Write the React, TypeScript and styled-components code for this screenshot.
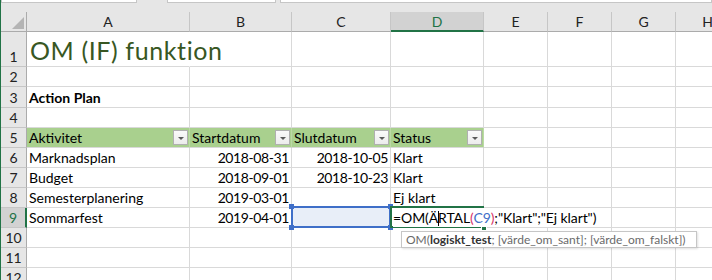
import React from "react";
import styled, { createGlobalStyle, css } from "styled-components";

const GREEN = "#217346";
const GRID = "#d9d9d9";
const REF_BLUE = "#3f6fc8";
const FONT = `Lato, "Noto Sans", "DejaVu Sans", sans-serif`;

const GlobalStyle = createGlobalStyle`
  html, body { margin: 0; padding: 0; background: #fff; }
  body { font-family: ${FONT}; }
  * { box-sizing: border-box; }
`;

const Window = styled.div`
  width: 712px;
  height: 280px;
  overflow: hidden;
  border-left: 1px solid ${GREEN};
  background: #fff;
  display: flex;
  flex-direction: column;
`;

const FormulaStrip = styled.div`
  height: 12px;
  flex: none;
  background: #e6e6e6;
  display: flex;
  align-items: flex-start;
`;

const FieldBox = styled.div<{ $width?: number; $gap?: number }>`
  height: 3px;
  background: #fff;
  border: 1px solid #c6c6c6;
  border-top: none;
  width: ${(p) => (p.$width ? `${p.$width}px` : "auto")};
  flex: ${(p) => (p.$width ? "none" : "1")};
  margin-left: ${(p) => p.$gap ?? 0}px;
`;

const Sheet = styled.div`
  display: grid;
  grid-template-columns: 26px 163px 102px 99px 93px 64px 64px 64px 64px;
  grid-template-rows: 20px 35px 20px 21px repeat(9, 20px);
`;

const Corner = styled.div`
  background: #e6e6e6;
  border-right: 1px solid #ababab;
  border-bottom: 1px solid #ababab;
  display: flex;
  justify-content: flex-end;
  align-items: flex-end;
  padding: 0 2px 2px 0;

  &::after {
    content: "";
    border-left: 12px solid transparent;
    border-bottom: 12px solid #b4b4b4;
  }
`;

const ColHead = styled.div<{ $active?: boolean }>`
  background: ${(p) => (p.$active ? "#d2d2d2" : "#e6e6e6")};
  border-right: 1px solid #c6c6c6;
  border-bottom: ${(p) => (p.$active ? `2px solid ${GREEN}` : "1px solid #ababab")};
  color: ${(p) => (p.$active ? GREEN : "#222")};
  font-size: 14px;
  display: flex;
  align-items: center;
  justify-content: center;
`;

const RowHead = styled.div<{ $active?: boolean }>`
  background: ${(p) => (p.$active ? "#d2d2d2" : "#e6e6e6")};
  border-bottom: 1px solid #c6c6c6;
  border-right: ${(p) => (p.$active ? `2px solid ${GREEN}` : "1px solid #ababab")};
  color: ${(p) => (p.$active ? GREEN : "#222")};
  font-size: 14px;
  line-height: 18px;
  display: flex;
  align-items: flex-end;
  justify-content: center;
`;

const Cell = styled.div<{ $align?: "left" | "right"; $bold?: boolean; $line?: string; $top?: boolean }>`
  position: relative;
  z-index: ${(p) => (p.$top ? 2 : "auto")};
  border-right: 1px solid ${(p) => p.$line ?? GRID};
  border-bottom: 1px solid ${GRID};
  background: #fff;
  display: flex;
  align-items: flex-end;
  justify-content: ${(p) => (p.$align === "right" ? "flex-end" : "flex-start")};
  padding: 0 2px;
  font-size: 14px;
  line-height: 18px;
  font-weight: ${(p) => (p.$bold ? 700 : 400)};
  white-space: nowrap;
  color: #000;
`;

const NumberText = styled.span`
  letter-spacing: -0.4px;
`;

const HeaderCell = styled(Cell)`
  background: #a9d08e;
  border-right-color: #bcd9a6;
  align-items: center;
  justify-content: space-between;
  padding-right: 1px;
`;

const FilterButton = styled.span`
  width: 15px;
  height: 15px;
  flex: none;
  border: 1px solid #b0b0b0;
  background: linear-gradient(#fafafa, #ececec);
  display: flex;
  align-items: center;
  justify-content: center;

  &::after {
    content: "";
    border-left: 3px solid transparent;
    border-right: 3px solid transparent;
    border-top: 3px solid #5a5a5a;
    margin-top: 1px;
  }
`;

const Title = styled.span`
  font-size: 25px;
  line-height: 30px;
  letter-spacing: 0.6px;
  padding: 0 0 1px 1px;
  color: #385723;
`;

const RefBox = styled.div`
  position: absolute;
  left: -1px;
  top: -2px;
  right: -1px;
  bottom: -1px;
  border: 2px solid ${REF_BLUE};
  background: #e8eef8;
`;

const Handle = styled.span<{ $x: "left" | "right"; $y: "top" | "bottom" }>`
  position: absolute;
  width: 5px;
  height: 5px;
  background: ${REF_BLUE};
  ${(p) => css`
    ${p.$x}: -4px;
    ${p.$y}: -4px;
  `}
`;

const EditFrame = styled.div`
  position: absolute;
  left: -1px;
  top: -2px;
  right: -1px;
  bottom: -1px;
  border: 2px solid ${GREEN};
  pointer-events: none;
`;

const FillHandle = styled.span`
  position: absolute;
  right: -5px;
  bottom: -5px;
  width: 6px;
  height: 6px;
  background: ${GREEN};
  border: 1px solid #fff;
`;

const FormulaText = styled.span`
  position: relative;
  z-index: 1;
  background: #fff;
  padding: 1px 4px 0 0;
  letter-spacing: -0.1px;
`;

const Paren = styled.span`
  color: #d8326a;
`;

const Ref = styled.span`
  color: ${REF_BLUE};
`;

const Caret = styled.span`
  display: inline-block;
  width: 1px;
  height: 15px;
  margin-right: -1px;
  background: #000;
  vertical-align: -3px;
`;

const Tooltip = styled.div`
  position: absolute;
  z-index: 2;
  left: 10px;
  top: 23px;
  width: 296px;
  height: 17px;
  padding: 0 4px;
  background: #fff;
  border: 1px solid #c6c6c6;
  box-shadow: 1px 1px 2px rgba(0, 0, 0, 0.12);
  font-size: 12px;
  line-height: 16px;
  color: #6a6a6a;
  white-space: nowrap;

  b {
    color: #333;
    font-weight: 700;
  }
`;

const columns = ["A", "B", "C", "D", "E", "F", "G", "H"];
const headers = ["Aktivitet", "Startdatum", "Slutdatum", "Status"];

const dataRows = [
  { n: 6, cells: ["Marknadsplan", "2018-08-31", "2018-10-05", "Klart"] },
  { n: 7, cells: ["Budget", "2018-09-01", "2018-10-23", "Klart"] },
  { n: 8, cells: ["Semesterplanering", "2019-03-01", "", "Ej klart"] },
];

const EmptyCells = ({ count }: { count: number }) => (
  <>
    {Array.from({ length: count }, (_, i) => (
      <Cell key={i} />
    ))}
  </>
);

export default function App() {
  return (
    <>
      <GlobalStyle />
      <Window>
        <FormulaStrip>
          <FieldBox $width={136} />
          <FieldBox $width={109} $gap={30} />
          <FieldBox $gap={4} />
        </FormulaStrip>
        <Sheet>
          <Corner />
          {columns.map((c) => (
            <ColHead key={c} $active={c === "D"}>
              {c}
            </ColHead>
          ))}

          <RowHead>1</RowHead>
          <Cell $line="transparent" $top>
            <Title>OM (IF) funktion</Title>
          </Cell>
          <EmptyCells count={7} />

          <RowHead>2</RowHead>
          <EmptyCells count={8} />

          <RowHead>3</RowHead>
          <Cell $bold>Action Plan</Cell>
          <EmptyCells count={7} />

          <RowHead>4</RowHead>
          <EmptyCells count={8} />

          <RowHead>5</RowHead>
          {headers.map((h) => (
            <HeaderCell key={h}>
              {h}
              <FilterButton />
            </HeaderCell>
          ))}
          <EmptyCells count={4} />

          {dataRows.map((row) => (
            <React.Fragment key={row.n}>
              <RowHead>{row.n}</RowHead>
              <Cell>{row.cells[0]}</Cell>
              <Cell $align="right">
                <NumberText>{row.cells[1]}</NumberText>
              </Cell>
              <Cell $align="right">
                <NumberText>{row.cells[2]}</NumberText>
              </Cell>
              <Cell>{row.cells[3]}</Cell>
              <EmptyCells count={4} />
            </React.Fragment>
          ))}

          <RowHead $active>9</RowHead>
          <Cell>Sommarfest</Cell>
          <Cell $align="right">
            <NumberText>2019-04-01</NumberText>
          </Cell>
          <Cell $top>
            <RefBox>
              <Handle $x="left" $y="top" />
              <Handle $x="right" $y="top" />
              <Handle $x="left" $y="bottom" />
              <Handle $x="right" $y="bottom" />
            </RefBox>
          </Cell>
          <Cell $top>
            <EditFrame>
              <FillHandle />
            </EditFrame>
            <FormulaText>
              =OM(Ä<Caret />RTAL<Paren>(</Paren>
              <Ref>C9</Ref>
              <Paren>)</Paren>;"Klart";"Ej klart")
            </FormulaText>
            <Tooltip>
              OM(<b>logiskt_test</b>; [värde_om_sant]; [värde_om_falskt])
            </Tooltip>
          </Cell>
          <EmptyCells count={4} />

          {[10, 11, 12].map((n) => (
            <React.Fragment key={n}>
              <RowHead>{n}</RowHead>
              <EmptyCells count={8} />
            </React.Fragment>
          ))}
        </Sheet>
      </Window>
    </>
  );
}
